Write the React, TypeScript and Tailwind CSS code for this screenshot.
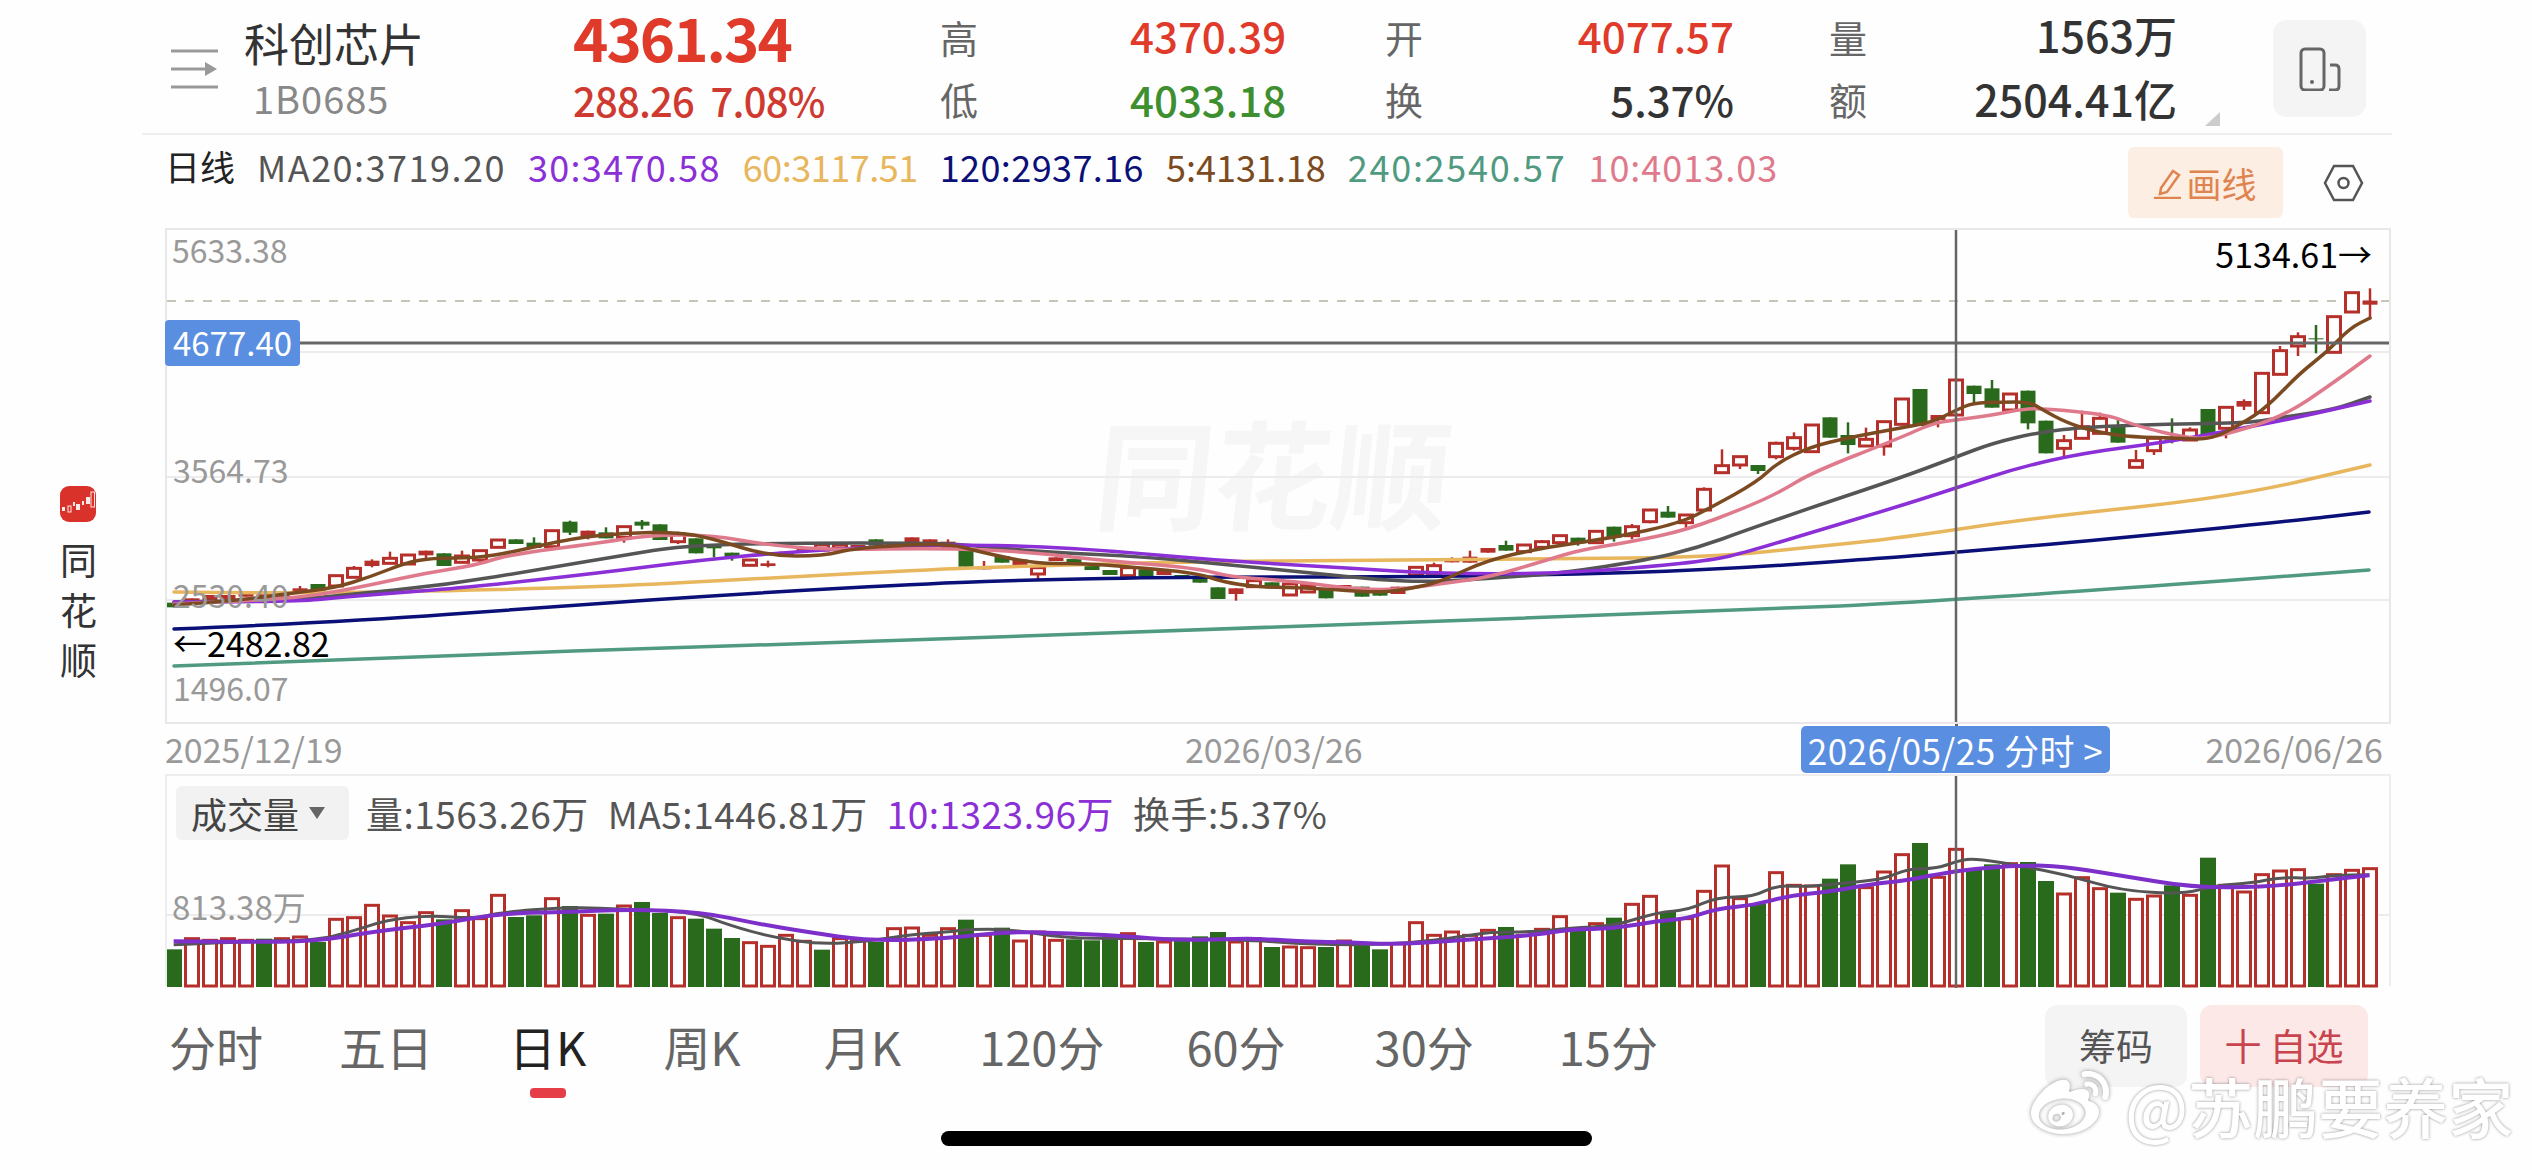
import React from "react";
import { FaWeibo } from "react-icons/fa";

type Pt = [number, number];

const RED = "#b5302a";
const GREEN = "#2a6a1d";
const CROSS = "#666666";

// candle rows: kind, body top, body bottom, high, low (read off the picture, y = base + v / 3)
type Raw = [string, number, number, number?, number?];

const zoneA: Raw[] = [
  ["g", 368, 382], ["r", 355, 368], ["r", 345, 360], ["r", 345, 358], ["r", 340, 350], ["r", 338, 350], ["r", 335, 350],
  ["r", 325, 340, 318], ["g", 312, 332], ["h", 287, 318], ["h", 265, 292, 258], ["r", 242, 258, 238, 262], ["h", 235, 250, 215],
  ["h", 225, 252], ["r", 212, 226, 212, 236], ["g", 220, 258], ["h", 228, 247, 212], ["h", 212, 240, 212, 248], ["h", 180, 202],
  ["g", 178, 192], ["g", 188, 204, 172], ["h", 152, 200], ["g", 125, 158, 122, 165], ["r", 152, 170, 152, 178], ["g", 157, 175, 142],
  ["h", 140, 172, 140, 188], ["g", 125, 137, 120, 148], ["g", 133, 180], ["h", 162, 185, 155, 192], ["g", 175, 220], ["g", 193, 205, 193, 232],
  ["g", 218, 230, 218, 242], ["h", 240, 256], ["r", 250, 258, 242, 262], ["r", 215, 230], ["r", 205, 215], ["h", 195, 210], ["h", 195, 205],
  ["r", 195, 205], ["g", 178, 197], ["r", 190, 200],
];
const zoneB: Raw[] = [
  ["r", 172, 190], ["r", 178, 192], ["r", 185, 205, 178], ["g", 205, 260], ["r", 262, 268, 243], ["g", 228, 248], ["r", 238, 255],
  ["h", 263, 282, 263, 298], ["r", 232, 243], ["g", 237, 250], ["g", 258, 270], ["g", 270, 285], ["h", 263, 287], ["g", 268, 288], ["r", 267, 285],
  ["g", 285, 297], ["g", 290, 308], ["g", 322, 357], ["r", 325, 342, 325, 362], ["h", 302, 320], ["g", 307, 325], ["h", 312, 345], ["h", 317, 336],
  ["g", 325, 355], ["r", 315, 330], ["g", 320, 350],
];
const zoneC: Raw[] = [
  ["g", 665, 677], ["r", 650, 672], ["h", 592, 615], ["h", 587, 610, 578], ["r", 572, 577, 562], ["r", 560, 578, 542], ["r", 534, 548], ["g", 525, 542, 512],
  ["h", 525, 545], ["h", 515, 532, 510], ["h", 497, 518], ["g", 503, 520, 503, 527], ["h", 484, 518], ["g", 470, 503, 470, 515], ["h", 470, 497, 462, 508],
  ["h", 420, 455, 420, 460], ["g", 425, 443, 408], ["h", 435, 458, 435, 475], ["h", 358, 420, 352], ["h", 287, 308, 238], ["h", 260, 285, 260, 297],
  ["g", 285, 303, 285, 312], ["h", 220, 260, 215, 268], ["h", 203, 235, 187, 242], ["h", 165, 245], ["g", 142, 203], ["g", 195, 225, 157, 250],
  ["h", 208, 228, 173], ["h", 155, 228, 155, 257],
];
const zoneD: Raw[] = [
  ["h", 537, 613], ["g", 507, 618], ["r", 585, 600, 585, 622], ["h", 480, 585], ["g", 497, 522, 497, 550], ["g", 505, 563, 480], ["h", 522, 570],
  ["g", 512, 610, 512, 628], ["g", 602, 700], ["h", 662, 685, 645, 708], ["h", 620, 655, 572], ["h", 595, 640, 578], ["g", 620, 668, 600],
  ["h", 722, 742, 690], ["h", 655, 692, 655, 705], ["g", 655, 659, 595, 670], ["h", 630, 660, 622], ["g", 567, 650], ["h", 562, 625, 562, 655],
  ["r", 543, 560, 538, 570], ["h", 460, 578], ["h", 392, 463, 378], ["h", 350, 378, 337, 408], ["g", 355, 358, 315, 400], ["h", 290, 397],
  ["h", 218, 276], ["r", 242, 254, 205, 298],
];

const candles = [
  ...zoneA.map((c) => ({ c, base: 480 })),
  ...zoneB.map((c) => ({ c, base: 480 })),
  ...zoneC.map((c) => ({ c, base: 370 })),
  ...zoneD.map((c) => ({ c, base: 220 })),
];

const volA =
  "g682 r650 r655 r650 r655 g650 r650 r645 g660 r592 r587 r550 r582 r602 r572 g592 r566 r590 r520 g585 g580 r530 g552 r580 g575 r552 g540 g573 r587 g590 g620 g648 r662 r673 r640 r658 g683 r650 r655 g660 r620 r618 r640 r620 g593 r640 g617 r657 r630 r655 g652 g655 g650 r635 g660 r660 g655 g643 g630 r660";
const volB =
  "r650 g675 r675 r677 g675 r657 g670 g682 r665 r602 r640 r630 r640 r625 g615 r640 r622 r584 g625 r605 g587 r547 r523 g570 r590 r508 r432 r530 g545 r452 r490 r492 g470 g427 r497 r450 r398 g363 r466 r382 g440 g427 r425 g420 g477 r516 r467 r500 g512 r532 r522 g490 r520 g407 r490 r510 r458 r447 r443 g485 r458 r445 r440";
const volumes = `${volA} ${volB}`.split(" ").map((v) => ({ kind: v[0], top: 720 + Number(v.slice(1)) / 3 }));

const maLines: { color: string; pts: Pt[] }[] = [
  { color: "#4f9a80", pts: [[174, 666], [446, 655], [701, 647], [940, 639], [1247, 628], [1780, 609], [1900, 603], [2100, 590], [2369, 570]] },
  { color: "#0b0f78", pts: [[174, 629], [344, 622], [548, 607], [752, 593], [940, 583], [1030, 580], [1180, 577], [1380, 577], [1547, 575], [1713, 570], [1900, 557], [1957, 552], [2100, 540], [2300, 520], [2369, 512]] },
  { color: "#e8b65c", pts: [[174, 592], [242, 593], [395, 592], [599, 587], [752, 579], [940, 569], [1030, 566], [1180, 562], [1380, 560], [1547, 559], [1713, 557], [1813, 547], [1900, 538], [2033, 518], [2233, 497], [2370, 465]] },
  { color: "#555555", pts: [[174, 602], [293, 600], [344, 595], [446, 585], [548, 568], [625, 555], [681, 546], [778, 543], [940, 543], [963, 545], [1047, 552], [1147, 557], [1230, 565], [1313, 573], [1380, 580], [1430, 582], [1497, 578], [1563, 573], [1647, 560], [1697, 548], [1747, 530], [1813, 507], [1900, 478], [1956, 457], [1993, 443], [2040, 432], [2087, 427], [2167, 424], [2250, 423], [2283, 417], [2333, 410], [2370, 397]] },
  { color: "#8b2fd6", pts: [[174, 602], [293, 602], [344, 597], [395, 593], [472, 587], [599, 573], [701, 560], [778, 553], [854, 548], [940, 545], [963, 545], [1030, 546], [1113, 551], [1213, 560], [1313, 566], [1380, 570], [1410, 572], [1480, 574], [1563, 573], [1647, 567], [1713, 560], [1747, 552], [1813, 532], [1900, 506], [1956, 488], [2017, 468], [2083, 453], [2167, 442], [2233, 430], [2300, 417], [2370, 401]] },
  { color: "#df7a8c", pts: [[174, 604], [268, 600], [319, 595], [370, 585], [426, 573], [477, 565], [507, 555], [599, 543], [650, 535], [711, 535], [768, 545], [829, 550], [940, 548], [1030, 552], [1097, 560], [1197, 568], [1230, 577], [1280, 580], [1380, 592], [1447, 583], [1490, 577], [1547, 560], [1580, 550], [1630, 542], [1687, 530], [1747, 507], [1780, 492], [1813, 472], [1900, 438], [1933, 423], [1956, 420], [1993, 415], [2017, 410], [2040, 408], [2110, 415], [2133, 425], [2190, 439], [2217, 437], [2283, 417], [2333, 383], [2370, 356]] },
  { color: "#7c4a21", pts: [[174, 605], [242, 600], [293, 593], [334, 588], [370, 577], [405, 563], [431, 558], [477, 558], [512, 552], [574, 538], [625, 533], [676, 532], [711, 538], [768, 556], [824, 556], [854, 548], [947, 543], [980, 552], [1037, 564], [1080, 563], [1130, 567], [1197, 573], [1223, 582], [1257, 587], [1313, 588], [1380, 593], [1413, 588], [1440, 582], [1487, 560], [1547, 547], [1613, 538], [1680, 523], [1710, 508], [1757, 482], [1777, 463], [1810, 447], [1847, 438], [1900, 428], [1933, 422], [1956, 410], [1973, 403], [2000, 402], [2030, 402], [2043, 410], [2067, 423], [2100, 433], [2133, 437], [2177, 438], [2210, 440], [2243, 423], [2267, 407], [2300, 373], [2327, 352], [2350, 328], [2370, 318]] },
];

const z6 = (p: Pt[]): Pt[] => p.map(([x, y]) => [140 + x / 1.4255, 720 + y / 3]);
const z7 = (p: Pt[]): Pt[] => p.map(([x, y]) => [1240 + x / 1.3635, 720 + y / 3]);

const volGray: Pt[] = [
  ...z6([[48, 668], [150, 658], [250, 655], [300, 630], [350, 595], [410, 580], [480, 590], [510, 572], [610, 555], [700, 562], [790, 570], [840, 610], [900, 645], [970, 667], [1040, 657], [1100, 637], [1150, 630], [1180, 622], [1240, 622], [1320, 648], [1400, 650]]),
  ...z7([[0, 652], [100, 668], [210, 668], [300, 645], [340, 630], [400, 630], [450, 618], [510, 612], [570, 570], [610, 565], [650, 525], [700, 525], [730, 490], [770, 495], [840, 480], [880, 470], [910, 440], [950, 440], [985, 412], [1010, 412], [1060, 430], [1130, 460], [1200, 505], [1285, 517], [1330, 490], [1380, 483], [1420, 465], [1460, 470], [1490, 460], [1540, 458]]),
];
const volPurple: Pt[] = [
  ...z6([[48, 658], [150, 660], [250, 658], [330, 630], [430, 605], [510, 575], [600, 570], [700, 562], [800, 570], [880, 605], [950, 630], [1040, 657], [1150, 650], [1230, 630], [1300, 632], [1400, 642], [1480, 655]]),
  ...z7([[0, 650], [20, 650], [100, 660], [140, 660], [210, 668], [300, 655], [400, 640], [450, 622], [510, 620], [570, 597], [610, 590], [650, 560], [700, 550], [750, 520], [800, 510], [860, 487], [910, 475], [950, 457], [1000, 440], [1070, 430], [1120, 432], [1200, 460], [1300, 497], [1400, 495], [1480, 475], [1540, 460]]),
];

function smooth(pts: Pt[]) {
  let d = `M${pts[0][0]} ${pts[0][1]}`;
  for (let i = 1; i < pts.length - 1; i++) {
    const mx = (pts[i][0] + pts[i + 1][0]) / 2;
    const my = (pts[i][1] + pts[i + 1][1]) / 2;
    d += ` Q${pts[i][0]} ${pts[i][1]} ${mx} ${my}`;
  }
  const last = pts[pts.length - 1];
  return `${d} L${last[0]} ${last[1]}`;
}

function MainChart() {
  return (
    <svg width="2222" height="492" viewBox="167 230 2222 492" className="absolute left-0 top-0 block">
      {[352, 477, 600].map((y) => (
        <line key={y} x1="167" x2="2389" y1={y} y2={y} stroke="#ececec" strokeWidth="2" />
      ))}
      <line x1="167" x2="2389" y1="301" y2="301" stroke="#c9c4b8" strokeWidth="2" strokeDasharray="9 9" />
      {candles.map(({ c, base }, i) => {
        const x = 174 + 18 * i;
        const [kind, t, b, hi, lo] = c;
        const top = base + t / 3;
        const bot = base + b / 3;
        const high = base + (hi ?? t) / 3;
        const low = base + (lo ?? b) / 3;
        const color = kind === "g" ? GREEN : RED;
        return (
          <g key={i}>
            <line x1={x} x2={x} y1={high} y2={low} stroke={color} strokeWidth="2.5" />
            {kind === "h" ? (
              <rect x={x - 6.5} y={top} width="13" height={bot - top} fill="#fff" stroke={color} strokeWidth="3" />
            ) : (
              <rect x={x - 7.5} y={top} width="15" height={bot - top} fill={color} />
            )}
          </g>
        );
      })}
      {maLines.map((l) => (
        <path key={l.color} d={smooth(l.pts)} fill="none" stroke={l.color} strokeWidth="3.5" strokeLinecap="round" />
      ))}
      <line x1="167" x2="2389" y1="343" y2="343" stroke={CROSS} strokeWidth="3" />
      <line x1="1956" x2="1956" y1="230" y2="722" stroke={CROSS} strokeWidth="2.5" />
    </svg>
  );
}

function VolumeChart() {
  return (
    <svg width="2222" height="212" viewBox="167 774 2222 212" className="absolute left-0 top-0 block">
      <line x1="167" x2="2389" y1="913" y2="913" stroke="#ececec" strokeWidth="2" />
      {volumes.map((v, i) => {
        const x = 174 + 18 * i;
        return v.kind === "g" ? (
          <rect key={i} x={x - 8} y={v.top} width="16" height={985 - v.top} fill={GREEN} />
        ) : (
          <rect key={i} x={x - 6.5} y={v.top} width="13" height={984 - v.top} fill="#fff" stroke={RED} strokeWidth="3" />
        );
      })}
      <path d={smooth(volGray)} fill="none" stroke="#555555" strokeWidth="3" />
      <path d={smooth(volPurple)} fill="none" stroke="#7d2fc9" strokeWidth="4" />
      <line x1="1956" x2="1956" y1="774" y2="986" stroke={CROSS} strokeWidth="2.5" />
    </svg>
  );
}

function LogoBadge() {
  return (
    <div className="h-[36px] w-[36px] rounded-[9px] bg-[#d9322b]">
      <svg width="36" height="36" viewBox="0 0 36 36" fill="#fbe9e7">
        <rect x="2" y="21" width="3" height="4" />
        <rect x="8" y="20" width="3" height="6" fill="none" stroke="#fbe9e7" strokeWidth="1" />
        <rect x="13" y="16" width="2" height="4" />
        <rect x="16" y="18" width="4" height="6" />
        <rect x="22" y="15" width="2" height="4" />
        <rect x="26" y="11" width="4" height="7" />
        <rect x="31" y="6" width="3.5" height="15" fill="none" stroke="#fbe9e7" strokeWidth="1" />
      </svg>
    </div>
  );
}

const tabs = [
  { label: "分时", cls: "ml-0 text-[#666666]" },
  { label: "五日", cls: "ml-[76px] text-[#666666]" },
  { label: "日K", cls: "ml-[76px] text-[#222222]", active: true },
  { label: "周K", cls: "ml-[77px] text-[#666666]" },
  { label: "月K", cls: "ml-[83px] text-[#666666]" },
  { label: "120分", cls: "ml-[78px] text-[#666666]" },
  { label: "60分", cls: "ml-[82px] text-[#666666]" },
  { label: "30分", cls: "ml-[89px] text-[#666666]" },
  { label: "15分", cls: "ml-[85px] text-[#666666]" },
];

export default function App() {
  return (
    <div className="relative flex h-[1170px] w-[2532px] overflow-hidden bg-[#fefefe] [font-family:'Noto_Sans_CJK_SC','Noto_Sans',sans-serif]">
      {/* app name on the left edge */}
      <div className="flex w-[142px] flex-col pl-[60px] pt-[486px]">
        <LogoBadge />
        <div className="mt-[12px] flex flex-col text-[37px] leading-[50px] text-[#333333]">
          <span>同</span>
          <span>花</span>
          <span>顺</span>
        </div>
      </div>

      <div className="flex w-[2250px] flex-col">
        {/* quote header */}
        <div className="relative flex h-[135px] border-b-2 border-[#eeeeee] pl-[29px]">
          <svg width="47" height="40" viewBox="0 0 47 40" className="mt-[49px] shrink-0" fill="none" stroke="#999999" strokeWidth="3">
            <path d="M0 2H47M0 20H34M0 38H47" />
            <path d="M34 13L46 20L34 27Z" fill="#999999" stroke="none" />
          </svg>
          <div className="ml-[26px] flex w-[329px] flex-col">
            <span className="mt-[14px] text-[45px] leading-[58px] text-[#333333]">科创芯片</span>
            <span className="mt-[3px] pl-[9px] text-[38px] leading-[46px] tracking-[1px] text-[#888888]">1B0685</span>
          </div>
          <div className="flex w-[367px] flex-col">
            <span className="mt-[3px] text-[60px] font-bold leading-[66px] tracking-[-2px] text-[#e03a2a]">4361.34</span>
            <span className="mt-[4px] text-[40px] font-medium leading-[54px] tracking-[-0.8px] text-[#cf3a30]">288.26&nbsp;&nbsp;7.08%</span>
          </div>
          <div className="flex w-[190px] flex-col text-[38px] leading-[62px] text-[#666666]">
            <span className="mt-[6px]">高</span>
            <span>低</span>
          </div>
          <div className="flex w-[255px] flex-col text-[42px] font-medium leading-[62px]">
            <span className="mt-[4px] text-[#e03a2a]">4370.39</span>
            <span className="mt-[2px] text-[#3d8f2f]">4033.18</span>
          </div>
          <div className="flex w-[60px] flex-col text-[38px] leading-[62px] text-[#666666]">
            <span className="mt-[6px]">开</span>
            <span>换</span>
          </div>
          <div className="flex w-[289px] flex-col items-end text-[42px] font-medium leading-[62px]">
            <span className="mt-[4px] text-[#e03a2a]">4077.57</span>
            <span className="mt-[2px] text-[#333333]">5.37%</span>
          </div>
          <div className="ml-[95px] flex w-[50px] flex-col text-[38px] leading-[62px] text-[#666666]">
            <span className="mt-[6px]">量</span>
            <span>额</span>
          </div>
          <div className="flex w-[298px] flex-col items-end text-[43px] font-medium leading-[62px] text-[#333333]">
            <span className="mt-[3px]">1563万</span>
            <span className="mt-[2px]">2504.41亿</span>
          </div>
          <svg width="15" height="14" viewBox="0 0 15 14" className="ml-[28px] mt-[112px] shrink-0">
            <path d="M15 0V14H0Z" fill="#cccccc" />
          </svg>
          <div className="ml-[53px] mt-[20px] flex h-[97px] w-[93px] items-center justify-center rounded-[14px] bg-[#f4f4f4]">
            <svg width="42" height="44" viewBox="0 0 42 44" fill="none" stroke="#666666" strokeWidth="3">
              <rect x="2" y="2" width="23" height="41" rx="4" />
              <path d="M31 18H36Q40 18 40 22V39Q40 43 36 43H30" />
              <circle cx="13" cy="35" r="2" fill="#666666" stroke="none" />
            </svg>
          </div>
        </div>

        {/* moving average legend */}
        <div className="flex h-[93px] items-start pl-[23px] text-[36px] leading-[44px]">
          <div className="mt-[9px] flex items-center gap-[22px]">
            <span className="text-[35px] text-[#222222]">日线</span>
            <span className="tracking-[1.5px] text-[#555555]">MA20:3719.20</span>
            <span className="tracking-[1.3px] text-[#8b2fd6]">30:3470.58</span>
            <span className="tracking-[-0.5px] text-[#e8b65c]">60:3117.51</span>
            <span className="tracking-[0.4px] text-[#0b0f78]">120:2937.16</span>
            <span className="tracking-[0px] text-[#7c4a21]">5:4131.18</span>
            <span className="tracking-[1.7px] text-[#4f9a80]">240:2540.57</span>
            <span className="tracking-[1px] text-[#df7a8c]">10:4013.03</span>
          </div>
          <div className="ml-auto mt-[12px] flex h-[71px] w-[155px] items-center justify-center gap-[4px] rounded-[6px] bg-[#fdeee4] text-[35px] text-[#e0844f]">
            <svg width="28" height="32" viewBox="0 0 28 32" fill="none" stroke="#e0844f" strokeWidth="2.5">
              <path d="M7 21L19 4L25 8L13 25L6 27Z" />
              <path d="M0 31H27" />
            </svg>
            画线
          </div>
          <svg width="41" height="38" viewBox="0 0 41 38" fill="none" stroke="#555555" strokeWidth="2.5" className="ml-[40px] mr-[28px] mt-[29px] shrink-0">
            <path d="M11 2H30L39 19L30 36H11L2 19Z" />
            <circle cx="20.5" cy="19" r="5" />
          </svg>
        </div>

        {/* candle chart */}
        <div className="relative ml-[23px] h-[496px] w-[2226px] border-2 border-[#e8e8e8] bg-[#fefefe]">
          <div className="absolute left-[930px] top-[175px] skew-x-[-6deg] text-[118px] font-bold leading-[130px] text-[#f6f6f6]">同花顺</div>
          <MainChart />
          <span className="absolute left-[5px] top-[1px] text-[32px] leading-[36px] text-[#999999]">5633.38</span>
          <span className="absolute left-[6px] top-[221px] text-[32px] leading-[36px] text-[#999999]">3564.73</span>
          <span className="absolute left-[6px] top-[346px] text-[32px] leading-[36px] text-[#999999]">2530.40</span>
          <span className="absolute left-[6px] top-[439px] text-[32px] leading-[36px] text-[#999999]">1496.07</span>
          <span className="absolute left-[6px] top-[395px] text-[34px] leading-[36px] text-black">←2482.82</span>
          <span className="absolute right-[17px] top-[6px] text-[34px] leading-[36px] text-black">5134.61→</span>
          <span className="absolute left-[-2px] top-[90px] flex h-[46px] w-[135px] items-center justify-center rounded-[4px] bg-[#5a8ee0] text-[33px] text-white">4677.40</span>
        </div>

        {/* date axis */}
        <div className="relative ml-[23px] flex h-[50px] w-[2226px] items-center justify-between pr-[8px] text-[34px] leading-[46px] text-[#999999]">
          <span>2025/12/19</span>
          <span className="absolute left-[1020px]">2026/03/26</span>
          <div className="absolute left-[1790px] top-0 h-[2px] w-[3px] bg-[#666666]" />
          <span className="absolute left-[1636px] top-[2px] flex h-[47px] w-[309px] items-center justify-center rounded-[5px] bg-[#5a8ee0] text-[35px] tracking-[0.5px] text-white">2026/05/25 分时 &gt;</span>
          <span>2026/06/26</span>
        </div>

        {/* volume pane */}
        <div className="relative ml-[23px] h-[212px] w-[2226px] border-x-2 border-t-2 border-[#eeeeee]">
          <VolumeChart />
          <div className="absolute left-[9px] top-[10px] flex items-center text-[37px] leading-[44px]">
            <div className="flex h-[54px] w-[173px] items-center gap-[10px] rounded-[6px] bg-[#f2f2f2] pl-[15px] text-[36px] text-[#444444]">
              成交量
              <svg width="16" height="12" viewBox="0 0 16 12">
                <path d="M0 0H16L8 12Z" fill="#666666" />
              </svg>
            </div>
            <div className="ml-[17px] flex gap-[19px] tracking-[0.5px]">
              <span className="text-[#555555]">量:1563.26万</span>
              <span className="text-[#555555]">MA5:1446.81万</span>
              <span className="text-[#8b2fd6]">10:1323.96万</span>
              <span className="text-[#555555]">换手:5.37%</span>
            </div>
          </div>
          <span className="absolute left-[5px] top-[112px] text-[33px] leading-[36px] text-[#999999]">813.38万</span>
        </div>

        {/* period tabs */}
        <div className="flex flex-1 items-start pl-[27px] pt-[30px]">
          {tabs.map((t) => (
            <div key={t.label} className={`flex flex-col items-center ${t.cls}`}>
              <span className="text-[47px] leading-[60px]">{t.label}</span>
              {t.active && <div className="mt-[12px] h-[10px] w-[36px] rounded-[4px] bg-[#e63e46]" />}
            </div>
          ))}
          <div className="ml-auto mt-[-11px] flex h-[82px] w-[142px] items-center justify-center rounded-[12px] bg-[#f4f4f5] text-[37px] text-[#555555]">筹码</div>
          <div className="ml-[13px] mr-[24px] mt-[-11px] flex h-[82px] w-[168px] items-center justify-center gap-[8px] rounded-[12px] bg-[#fde8e8] text-[37px] text-[#c8444e]">
            <span>十</span>
            <span>自选</span>
          </div>
        </div>
      </div>

      {/* weibo watermark and home bar sit over the page */}
      <div className="absolute left-[2025px] top-[1066px] flex items-center gap-[10px] text-white">
        <FaWeibo className="h-[78px] w-[90px] [filter:drop-shadow(0_0_2px_rgba(0,0,0,0.4))]" />
        <span className="text-[65px] font-medium leading-[76px] [text-shadow:0_0_3px_rgba(0,0,0,0.45)]">@苏鹏要养家</span>
      </div>
      <div className="absolute left-[941px] top-[1131px] h-[15px] w-[651px] rounded-full bg-black" />
    </div>
  );
}
